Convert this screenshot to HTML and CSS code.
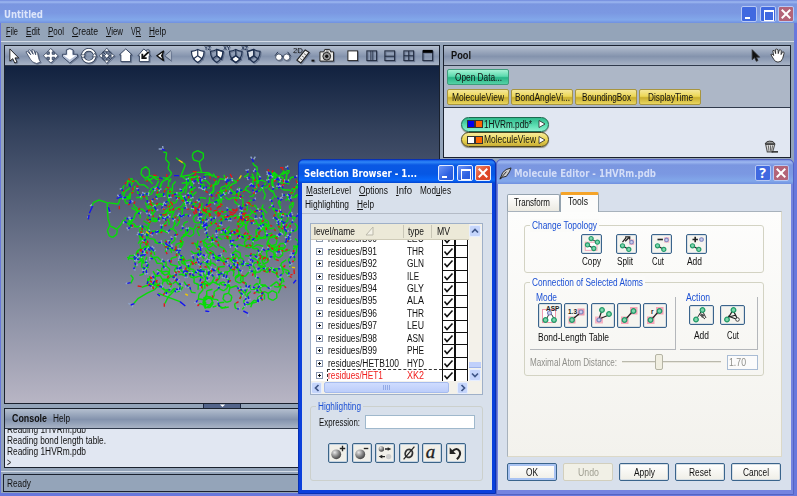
FILE: index.html
```html
<!DOCTYPE html>
<html lang="en">
<head>
<meta charset="utf-8">
<title>Untitled</title>
<link rel="stylesheet" href="styles.css">
</head>
<body>
<svg class="defs" width="0" height="0">
  <defs>
    <radialGradient id="ball" cx=".35" cy=".3" r=".8"><stop offset="0" stop-color="#e8e8e8"/><stop offset=".5" stop-color="#888"/><stop offset="1" stop-color="#333"/></radialGradient>
    <g id="shield"><path d="M2.500 4.500Q6 4 9 2.500Q12 4 15.500 4.500Q15.500 11.500 9 16Q2.500 11.500 2.500 4.500Z"/><path d="M9 2.500V9L4 12.500M9 9L14 12.500" fill="none"/></g>
    <g id="atom"><circle r="2.300" fill="#7fd6ad" stroke="#219a68" stroke-width="1.300"/></g>
    <g id="atomb"><circle r="2" fill="#c9cef0" stroke="#7d86bd" stroke-width="1.200"/></g>
    <g id="pair"><path d="M6 12L13 16" stroke="#222" stroke-width="1.300"/><use href="#atom" x="6" y="12"/><use href="#atom" x="13" y="16"/></g>
  </defs>
</svg>
<div class="main">
  <header class="titlebar"><span class="cap" data-w="39">Untitled</span>
    <span class="winbtns dim"><i class="wb min"></i><i class="wb max"></i><i class="wb close"></i></span>
  </header>
  <nav class="menu">
    <span data-w="12"><u>F</u>ile</span><span data-w="14"><u>E</u>dit</span><span data-w="16"><u>P</u>ool</span><span data-w="26"><u>C</u>reate</span><span data-w="17"><u>V</u>iew</span><span data-w="10">V<u>R</u></span><span data-w="17"><u>H</u>elp</span>
  </nav>
  <div class="work">
    <section class="left">
      <div class="viewer">
        <div class="toolbar" id="toolbar">
          <svg viewBox="0 0 18 18"><path d="M5 2V14.500L8 12L10 16.500L12.300 15.500L10.300 11.200H14Z" fill="#fff" stroke="#111" stroke-width=".9"/></svg>
          <svg viewBox="0 0 18 18"><path d="M2 5Q3 3.500 5 6L7 8L4.500 3.500Q6 2 7 4L9.500 7.500L8 3Q9.500 1.800 10.500 4L12 8L12 5Q13.500 4 14 6.500L15 11Q15.500 14 17 15.500L13 17Q8 16 6.500 12.500Z" fill="#fff" stroke="#33415c" stroke-width=".8"/></svg>
          <svg viewBox="0 0 18 18"><path d="M9 1.500L12.500 5H10.500V7.500H13V5.500L16.500 9L13 12.500V10.500H10.500V13H12.500L9 16.500L5.500 13H7.500V10.500H5V12.500L1.500 9L5 5.500V7.500H7.500V5H5.500Z" fill="#fff" stroke="#33415c" stroke-width=".9"/></svg>
          <svg viewBox="0 0 18 18"><path d="M5.500 3L9 1.500L12.500 3V7.500L17 7.500V10L9 16.500L1.500 10V7.500H5.500Z" fill="#b4bfd6" stroke="#33415c" stroke-width=".9"/><path d="M6.500 3.500L9 2.500L11.500 3.500V8.500H15.500L9 13L2.500 8.500H6.500Z" fill="#fff"/></svg>
          <svg viewBox="0 0 18 18"><circle cx="9" cy="9" r="6.200" fill="none" stroke="#28364f" stroke-width="3.400"/><circle cx="9" cy="9" r="6.200" fill="none" stroke="#fff" stroke-width="1.900"/><path d="M.5 8H5.500L3 11.500ZM12.500 10H17.500L15 6.500Z" fill="#fff" stroke="#28364f" stroke-width=".7"/></svg>
          <svg viewBox="0 0 18 18"><circle cx="9" cy="9" r="5.500" fill="none" stroke="#33415c" stroke-width="1"/><path d="M9 2V16M2 9H16M5 5L13 13M13 5L5 13" stroke="#33415c" stroke-width="1"/><path d="M9 1L11.500 4.500H6.500ZM9 17L11.500 13.500H6.500ZM1 9L4.500 6.500V11.500ZM17 9L13.500 6.500V11.500ZM9 6.500L11.500 9L9 11.500L6.500 9Z" fill="#fff" stroke="#28364f" stroke-width=".7"/></svg>
          <svg viewBox="0 0 18 18"><path d="M9 2L15.500 8H14V15H4V8H2.500Z" fill="#fff" stroke="#33415c" stroke-width="1"/></svg>
          <svg viewBox="0 0 18 18"><path d="M8 2L11 4.500V3H13.500V7L15 9H13.500V15H3.500V9H2Z" fill="#fff" stroke="#33415c" stroke-width="1"/><path d="M13 5L7 11M6.500 7V11.500H11" fill="none" stroke="#111" stroke-width="1.900"/></svg>
          <svg viewBox="0 0 18 18"><path d="M9 4L2 9L9 14Q6.500 9 9 4Z" fill="#fff" stroke="#111" stroke-width="1.300"/><path d="M8 5.500L6 9L8 12.500Z" fill="#111"/><path d="M16.500 3.500L10 9L16.500 14" fill="#aeb8c8" stroke="#536079"/></svg>
          <svg class="s1" viewBox="0 0 18 18" fill="#fff" stroke="#1f3050" stroke-width="1.200"><use href="#shield"/></svg>
          <svg viewBox="0 0 18 18" fill="none" stroke="#1f3050" stroke-width="1.200"><path d="M9 2.500L15.500 4.500L14 12.500L9 9Z" fill="#fff"/><use href="#shield"/><text x="-4" y="3.500" class="tt">YZ</text></svg>
          <svg viewBox="0 0 18 18" fill="none" stroke="#1f3050" stroke-width="1.200"><path d="M9 9L14 12.500L9 16L4 12.500Z" fill="#fff"/><use href="#shield"/><text x="-4" y="3.500" class="tt">XY</text></svg>
          <svg viewBox="0 0 18 18" fill="none" stroke="#1f3050" stroke-width="1.200"><path d="M9 2.500L2.500 4.500L4 12.500L9 9Z" fill="#dde2ea"/><use href="#shield"/><text x="-4" y="3.500" class="tt">XZ</text></svg>
          <svg class="s2" viewBox="0 0 18 18"><path d="M1 9L4 5M17 9L14 5M7 9.500H11" stroke="#28364f" fill="none"/><circle cx="5" cy="10.500" r="3.300" fill="#fff" stroke="#28364f" stroke-width=".8"/><circle cx="13" cy="10.500" r="3.300" fill="#fff" stroke="#28364f" stroke-width=".8"/></svg>
          <svg class="s3" viewBox="0 0 18 18"><path d="M11.500 3L15.500 5.500L7 16.500L3 13.500Z" fill="#eee" stroke="#222" stroke-width="1.200"/><path d="M6.500 12L8 13M8.500 9.500L10 10.500M10.500 7L12 8" stroke="#444"/><text x="-1" y="6" class="t2">2D</text><rect x="18" y="13" width="3" height="2" fill="#111"/></svg>
          <svg class="s4" viewBox="0 0 18 18"><path d="M2 5H6L7 2.500H12L13 5H16V14.500H2Z" fill="#e9e9e6" stroke="#222"/><circle cx="9" cy="9.500" r="4" fill="#999" stroke="#222"/><circle cx="9" cy="9.500" r="1.700" fill="#111"/><rect x="8" y="3.500" width="3" height="1.500" fill="#888"/></svg>
          <svg class="s5" viewBox="0 0 18 18"><rect x="4" y="4" width="10" height="10" fill="#fff" stroke="#222"/></svg>
          <svg viewBox="0 0 18 18" class="ln"><rect x="4" y="4" width="10" height="10"/><path d="M8 4V14M10 4V14" stroke-width=".8"/></svg>
          <svg viewBox="0 0 18 18" class="ln"><rect x="4" y="4" width="10" height="10"/><path d="M4 9.500H14"/></svg>
          <svg viewBox="0 0 18 18" class="ln"><rect x="4" y="4" width="10" height="10"/><path d="M4 9H14M9 4V14"/></svg>
          <svg viewBox="0 0 18 18" class="ln"><rect x="4" y="4" width="10" height="10"/><path d="M4 4.500H14" stroke="#000" stroke-width="3"/></svg>
        </div>
        <div class="viewport"><svg id="mol" class="mol" viewBox="0 0 660 570"></svg></div>
      </div>
      <div class="grip"><svg viewBox="0 0 8 4"><path d="M1 .5H7L4 3.500Z" fill="#fff"/></svg></div>
      <div class="console">
        <div class="phead"><b data-w="35">Console</b><span data-w="17">Help</span></div>
        <div class="log"><p><span data-w="79">Reading 1HVRm.pdb</span></p><p><span data-w="99">Reading bond length table.</span></p><p><span data-w="79">Reading 1HVRm.pdb</span></p><p><span data-w="4">&gt;</span></p></div>
      </div>
    </section>
    <section class="pool">
      <div class="phead"><b data-w="20">Pool</b>
        <svg class="parr" viewBox="0 0 18 18"><path d="M5 2V14L8 11.500L10 16L12 15L10 11H14Z" fill="#111" stroke="#333"/></svg>
        <svg class="phand" viewBox="0 0 18 18"><path d="M2 8Q3 6.500 5 9L4 4Q5.500 2.500 6.500 5L7 7L7 2.500Q8.500 1.500 9.500 3L9.800 7L11 3Q12.500 2.500 13 4L12.800 8L14.500 5Q16 5 16 6.500L14.500 12Q13.500 16 9.500 16Q6.500 16 5 13Z" fill="#fff" stroke="#222" stroke-width=".9"/></svg>
      </div>
      <div class="pbtns">
        <div class="pb green"><span data-w="47">Open Data...</span></div>
        <div class="prow"><div class="pb"><span data-w="52">MoleculeView</span></div><div class="pb"><span data-w="55">BondAngleVi...</span></div><div class="pb"><span data-w="49">BoundingBox</span></div><div class="pb"><span data-w="45">DisplayTime</span></div></div>
      </div>
      <div class="plist">
        <div class="nodes">
          <div class="node green"><i class="sq bl"></i><i class="sq or"></i><span data-w="48">1HVRm.pdb*</span><svg viewBox="0 0 8 8"><path d="M1 .5L7 4L1 7.500Z" fill="#fff" stroke="#222" stroke-width=".8"/></svg></div>
          <div class="node"><i class="sq"></i><i class="sq or"></i><span data-w="52">MoleculeView</span><svg viewBox="0 0 8 8"><path d="M1 .5L7 4L1 7.500Z" fill="#fff" stroke="#222" stroke-width=".8"/></svg></div>
        </div>
        <svg class="bin" viewBox="0 0 14 14"><path d="M2.500 5L4 12H9L11 5Z" fill="#ddd" stroke="#555"/><path d="M5 6L5.500 11M7 6V11M9 6L8 11" stroke="#555" stroke-width=".8"/><path d="M8 12H14" stroke="#333" stroke-width="1.500"/><path d="M2 4.500Q3 2 6 2Q10 1.500 11 4.500Z" fill="#999" stroke="#222" stroke-width=".8"/></svg>
      </div>
    </section>
  </div>
  <div class="statuswrap"><div class="status"><span data-w="24">Ready</span></div></div>
</div>

<div class="sel">
  <header class="seltitle"><span class="cap" data-w="113">Selection Browser - 1...</span><span class="winbtns"><i class="wb min"></i><i class="wb max"></i><i class="wb close"></i></span></header>
  <div class="selbody">
    <nav class="smenu"><div><span data-w="45"><u>M</u>asterLevel</span><span data-w="29"><u>O</u>ptions</span><span data-w="16"><u>I</u>nfo</span><span data-w="31">Mod<u>u</u>les</span></div><div class="r2"><span data-w="44">Hi<u>g</u>hlighting</span><span data-w="17"><u>H</u>elp</span></div></nav>
    <div class="tree">
      <div class="treetop">
        <div class="treemain">
          <div class="thead"><span class="c1"><span data-w="41">level/name</span><svg viewBox="0 0 10 10"><path d="M1 9L8 1V9Z" fill="#f4f2e8" stroke="#bbb9aa"/></svg></span><span class="c2"><span data-w="16">type</span></span><span class="c3"><span data-w="13">MV</span></span></div>
          <div class="rows"><div id="rows"></div></div>
        </div>
        <div class="vs"><i class="sb"><svg viewBox="0 0 10 10"><path d="M2 6.500L5 3.500L8 6.500"/></svg></i><b></b><i class="th"></i><i class="sb"><svg viewBox="0 0 10 10"><path d="M2 3.500L5 6.500L8 3.500"/></svg></i></div>
      </div>
      <div class="hs"><i class="sb"><svg viewBox="0 0 10 10"><path d="M6.500 2L3.500 5L6.500 8"/></svg></i><i class="ht"><em></em><em></em><em></em><em></em></i><b></b><i class="sb"><svg viewBox="0 0 10 10"><path d="M3.500 2L6.500 5L3.500 8"/></svg></i></div>
    </div>
    <div class="hl"><span class="lg"><span data-w="43">Highlighting</span></span>
      <div class="expr"><span data-w="41">Expression:</span><div class="inp"></div></div>
      <div class="hbtns">
        <i><svg viewBox="0 0 20 20"><circle cx="8" cy="11.500" r="5.500" fill="url(#ball)"/><path d="M15 2V8M12 5H18" stroke="#222" stroke-width="1.500"/></svg></i>
        <i><svg viewBox="0 0 20 20"><circle cx="8" cy="11.500" r="5.500" fill="url(#ball)"/><path d="M12 5H17" stroke="#222" stroke-width="1.500"/></svg></i>
        <i><svg viewBox="0 0 20 20"><circle cx="6" cy="5.500" r="3" fill="url(#ball)"/><circle cx="14" cy="14" r="3" fill="#ccc"/><path d="M10 5.500H14M6 14H10" stroke="#222" stroke-width="1.500"/><path d="M13 3.500L17 5.500L13 7.500ZM7 12L3 14L7 16Z" fill="#222"/></svg></i>
        <i><svg viewBox="0 0 20 20"><ellipse cx="10" cy="10.500" rx="4" ry="4.500" transform="rotate(20 10 10)" fill="none" stroke="#333" stroke-width="2"/><path d="M4 17L16 3" stroke="#222" stroke-width="1.400"/></svg></i>
        <i><svg viewBox="0 0 20 20"><text x="3" y="15.500" class="al">a</text></svg></i>
        <i><svg viewBox="0 0 20 20"><path d="M6 8Q11 3 14 8Q16 12 11 17" fill="none" stroke="#222" stroke-width="2.300"/><path d="M3 4V11H10Z" fill="#222"/></svg></i>
      </div>
    </div>
  </div>
</div>

<div class="ed">
  <header class="edtitle"><svg viewBox="0 0 14 14"><path d="M1 13L4 6Q7 2 13 1Q12 5 8 10L4 11Z" fill="#ccc" stroke="#222"/><path d="M1 13L8 5" stroke="#222"/></svg><span class="cap" data-w="142">Molecule Editor - 1HVRm.pdb</span><span class="winbtns dim"><i class="wb q">?</i><i class="wb close"></i></span></header>
  <div class="edbody">
    <div class="tabs"><div class="tab"><span data-w="36">Transform</span></div><div class="tab on"><span data-w="20">Tools</span></div></div>
    <div class="panel">
      <div class="grp g1"><span class="lg"><span data-w="65">Change Topology</span></span>
        <div class="tools">
          <div><i><svg viewBox="0 0 20 20"><rect x="2.500" y="8" width="13" height="9" fill="#fff" stroke="#ef9aae"/><path d="M8 4L16 8" stroke="#222"/><use href="#atom" x="9" y="4"/><use href="#atom" x="16" y="8"/><use href="#pair" x="-1" y="-1"/></svg></i><span data-w="19">Copy</span></div>
          <div><i><svg viewBox="0 0 20 20"><path d="M5 8L9 3M8 2H13V7M12 3L8 7" stroke="#222" stroke-width="1.400" fill="none"/><rect x="12.500" y="5" width="5.500" height="6" fill="#f7b3c4"/><use href="#atomb" x="15" y="8"/><use href="#pair" x="-1"/></svg></i><span data-w="16">Split</span></div>
          <div><i><svg viewBox="0 0 20 20"><path d="M5 5H11" stroke="#222" stroke-width="1.800"/><rect x="12.500" y="2.500" width="5.500" height="6" fill="#f7b3c4"/><use href="#atomb" x="15" y="5.500"/><use href="#pair" x="-1"/></svg></i><span data-w="12">Cut</span></div>
          <div><i><svg viewBox="0 0 20 20"><path d="M5 5H11M8 2V8" stroke="#222" stroke-width="1.800"/><use href="#atomb" x="15" y="5"/><use href="#pair" x="-1"/></svg></i><span data-w="15">Add</span></div>
        </div>
      </div>
      <div class="grp g2"><span class="lg"><span data-w="111">Connection of Selected Atoms</span></span>
        <div class="boxes">
          <div class="sub mode"><span class="st"><span data-w="21">Mode</span></span>
            <div class="mb">
              <i><svg viewBox="0 0 22 22"><rect x="3.500" y="5.500" width="13" height="13" fill="#fff" stroke="#ef9aae"/><path d="M7 16L11 8L16 16" stroke="#333" fill="none"/><use href="#atom" x="6.500" y="16"/><use href="#atom" x="15" y="16"/><use href="#atomb" x="10.500" y="9"/><text x="7" y="6.500" class="ic">ASP</text></svg></i>
              <i><svg viewBox="0 0 22 22"><rect x="3.500" y="12.500" width="7" height="7" fill="#ef9aae"/><rect x="12.500" y="4.500" width="7" height="7" fill="#ef9aae"/><path d="M9 14L14 10" stroke="#222" stroke-width="1.400"/><use href="#atom" x="7" y="16"/><use href="#atomb" x="16" y="8"/><text x="3" y="10" class="ic">1.3</text></svg></i>
              <i><svg viewBox="0 0 22 22"><rect x="3" y="12.500" width="8" height="7" fill="#f7b3c4"/><path d="M7 15L10 6M7 15L17 11" stroke="#222" stroke-width="1.200"/><use href="#atomb" x="7" y="16"/><use href="#atom" x="10" y="6"/><use href="#atom" x="17" y="10"/></svg></i>
              <i><svg viewBox="0 0 22 22"><rect x="3" y="12.500" width="7.500" height="7.500" fill="#f7a3b8"/><rect x="12" y="3" width="7.500" height="7.500" fill="#f7a3b8"/><path d="M7 16L15 7" stroke="#222" stroke-width="1.200"/><use href="#atom" x="6.500" y="16"/><use href="#atom" x="15.500" y="7"/></svg></i>
              <i><svg viewBox="0 0 22 22"><rect x="3" y="12.500" width="7.500" height="7.500" fill="#f7a3b8"/><rect x="12" y="3" width="7.500" height="7.500" fill="#f7a3b8"/><path d="M7 16L15 7" stroke="#222" stroke-width="1.200"/><use href="#atom" x="6.500" y="16"/><use href="#atom" x="15.500" y="7"/><text x="7" y="10" class="ic">r</text></svg></i>
            </div>
            <p><span data-w="71">Bond-Length Table</span></p>
          </div>
          <div class="sub act"><span class="st"><span data-w="24">Action</span></span>
            <div class="ab">
              <div><i><svg viewBox="0 0 22 18"><path d="M6 14L12 4L16 12M9 8L15 13" stroke="#333" fill="none"/><path d="M10 7L15 9L12 12Z" fill="#555"/><use href="#atom" x="6" y="13.500"/><use href="#atom" x="12.500" y="4"/></svg></i><span data-w="15">Add</span></div>
              <div><i><svg viewBox="0 0 22 18"><path d="M6 14L12 4L16 12M7 10L15 13M8 11L15 9" stroke="#222" stroke-width="1.300" fill="none"/><use href="#atom" x="6" y="13.500"/><use href="#atom" x="12.500" y="4"/><circle cx="16.500" cy="13.500" r="1.800" fill="#fff" stroke="#444"/></svg></i><span data-w="12">Cut</span></div>
            </div>
          </div>
        </div>
        <div class="dist"><span data-w="87">Maximal Atom Distance:</span><div class="track"><i></i></div><div class="num"><span data-w="17">1.70</span></div></div>
      </div>
    </div>
    <div class="bbar"><div class="bt def"><span data-w="12">OK</span></div><div class="bt off"><span data-w="21">Undo</span></div><div class="bt"><span data-w="21">Apply</span></div><div class="bt"><span data-w="22">Reset</span></div><div class="bt"><span data-w="26">Cancel</span></div></div>
  </div>
</div>
<script src="app.js"></script>
</body>
</html>
```
FILE: styles.css
```css
*{box-sizing:border-box}
body{margin:0;width:797px;height:496px;overflow:hidden;position:relative;font:10px/13px "Liberation Sans",Arial,sans-serif;color:#111;background:#6e80dc}
p{margin:0}
i,em{font-style:normal;display:block}
svg{display:block;flex:none;overflow:visible}
.defs{position:absolute}
[data-w]{display:inline-block;white-space:nowrap;transform-origin:0 50%;flex:none}
u{text-underline-offset:1px}
.cap{font:bold 10.500px/16px "DejaVu Sans","Noto Sans",sans-serif}
.main{width:797px;height:496px;display:flex;flex-direction:column;border:solid #6878dc;border-width:0 3px 3px 1px;background:#94a4b9}
.titlebar{height:23px;flex:none;margin:0 -3px 0 -1px;padding:4px 3px 0 4px;display:flex;align-items:center;color:#dce5fa;background:linear-gradient(#6f88dc 0,#9db8f0 2px,#7a96e0 4px,#7b98e2 13px,#82a8ea 20px,#7090e0 23px)}
.winbtns{display:flex;gap:2.500px;margin-left:auto}
.wb{width:16px;height:16px;border:1px solid #e4ecff;border-radius:2px;background:linear-gradient(135deg,#6f96f6,#2f62e2 60%,#2757d6);position:relative}
.dim .wb{background:#4069e0;border-color:#b7c8f4}
.wb.min::after{content:"";position:absolute;left:3px;bottom:2px;width:5px;height:2px;background:#fff}
.wb.max::after{content:"";position:absolute;left:3px;top:3px;width:8px;height:8px;border:1px solid #fff;border-top-width:2px}
.wb.close{background:linear-gradient(135deg,#f08a68,#dc4526 60%)}
.dim .wb.close{background:#b36478}
.wb.close::before,.wb.close::after{content:"";position:absolute;left:1px;top:6px;width:12px;height:2px;background:#fff;transform:rotate(45deg)}
.wb.close::after{transform:rotate(-45deg)}
.wb.q{font:bold 14px/14px "Open Sans",sans-serif;color:#fff;text-align:center}
.menu{height:19px;flex:none;border-bottom:1px solid #d3dbe6;display:flex;gap:8px;padding:2px 0 0 5px}
.work{display:flex;gap:4px;padding:3px 2px 0 3px;height:429px;flex:none}
.left{width:436px;flex:none}
.viewer{height:359px;border:1px solid #1a212e;display:flex;flex-direction:column}
.toolbar,.phead{height:20px;flex:none;border-bottom:1px solid #303a4c;background:linear-gradient(#b4bfcf,#8493ad 55%,#93a1b8 75%,#a8b3c5)}
.toolbar{display:flex;align-items:center}
.toolbar svg{width:17.500px;height:17.500px;margin-right:1.200px;filter:drop-shadow(1px 1px .5px rgba(35,50,80,.35))}
.toolbar .s1{margin-left:16px}.toolbar .s2{margin-left:10.500px}.toolbar .s3{margin-left:1px}.toolbar .s4{margin-left:5px}.toolbar .s5{margin-left:7.500px}
.ln{fill:none;stroke:#222c40;stroke-width:1.100}
.tt{font:bold 5.500px "Liberation Sans";fill:#1f3050;stroke:none}
.t2{font:8px "Liberation Sans";fill:#111}
.viewport{flex:1;background:linear-gradient(#11213f 0,#33415c 19%,#9094a8 76%,#b8b5c4 100%);overflow:hidden;padding:64px 0 0 75px}
.mol{width:220px;height:190px;fill:none;stroke-width:4.200;stroke-linecap:butt}
.grip{height:4px;width:38px;margin-left:199px;background:#53648a;border:solid #1d2740;border-width:0 1px;display:flex;justify-content:center}
.grip svg{width:7px;height:3.500px}
.console{height:60px;border:1px solid #1a212e;background:#e1e7f2;display:flex;flex-direction:column}
.phead{display:flex;align-items:center;padding-left:7px;gap:6px}
.phead b{font-weight:bold}
.log{padding-left:2px;overflow:hidden;flex:1}
.log p{height:11px;line-height:11px}
.log p:first-child{margin-top:-5px}
.pool{width:348px;height:113px;border:1px solid #1a212e;display:flex;flex-direction:column;background:#e1e7f2;margin-left:-1px}
.pool .phead{padding-left:7px}
.parr{width:15px;height:15px;margin-left:auto}
.phand{width:17px;height:17px;margin-right:4px}
.pbtns{height:42px;flex:none;background:#adb7c7;border-bottom:1px solid #303a4c;padding:3px 0 0 3px}
.prow{display:flex;gap:2px;margin-top:4px}
.pb{width:62px;height:16px;border:1px solid #a8953e;border-radius:2px;background:linear-gradient(#f4e79a,#ecd755 45%,#c9ae2e 55%,#e9d65f);display:flex;align-items:center;justify-content:center}
.pb.green{background:linear-gradient(#a4f2d4,#5cdaae 45%,#28b586 55%,#55d2a6);border-color:#3f9c7c}
.plist{flex:1;display:flex;justify-content:space-between;align-items:flex-end;padding:0 12px 3px 17px}
.nodes{display:flex;flex-direction:column;gap:.5px;align-self:flex-start;margin-top:8.500px}
.node{width:88px;height:15px;border:1px solid #4d4520;border-radius:8px;display:flex;align-items:center;padding-left:4.500px;gap:.5px;background:linear-gradient(#f6ea9c,#ecd755 50%,#c8ad35);box-shadow:0 1px 1px #8e8c80}
.node.green{background:linear-gradient(#2eb98b,#5fe0b4 60%,#8ef0cf);border-color:#1c6b50}
.node svg{width:8px;height:8px;margin-left:auto;margin-right:2.500px}
.sq{width:8px;height:8px;flex:none;border:1px solid #333;background:#fff}
.sq.or{background:#f60}.sq.bl{background:#00e}
.bin{width:15px;height:15px}
.statuswrap{margin-left:0;border-top:1px solid #d3dbe6;padding:2px 2px 0 2px}
.status{height:18px;border:1px solid #1a212e;padding:2px 0 0 3px}

.sel{position:absolute;left:298px;top:159px;width:198px;height:335px;background:#0a3fdc;border:1px solid #0831b4;border-radius:5px 5px 0 0;padding:0 3px 3px;display:flex;flex-direction:column}
.seltitle{height:23px;flex:none;display:flex;align-items:center;color:#fff;margin:0 -3px;padding:2px 4px 0 5px;border-radius:5px 5px 0 0;background:linear-gradient(#0d55e6,#2f86f8 2px,#0a58e4 5px,#0657e4 14px,#0868fa 20px,#0346d2)}
.selbody{flex:1;background:#d8e0eb}
.smenu{height:31px;border-bottom:1px solid #b4bbc6;padding:1px 0 0 4px}
.smenu div{display:flex;gap:8px;height:14px}
.smenu .r2{margin-left:-1px}
.tree{margin:9px 0 0 8px;width:173px;height:172px;border:1px solid #9fb0c8;background:#fff}
.treetop{display:flex;height:157px}
.treemain{width:158px}
.thead{height:16px;background:#ece9d8;border-bottom:1px solid #cfcbb8;display:flex;align-items:center}
.thead .c1{width:93px;display:flex;padding-left:3px;gap:10px;border-right:1px solid #c9c6b6}
.thead .c1 svg{width:10px;height:10px;margin-top:1px}
.thead .c2{width:28px;padding-left:4px;border-right:1px solid #c9c6b6}
.thead .c3{padding-left:5px}
.thead>span{height:13px}
.rows{height:141px;overflow:hidden}
#rows{margin-top:-7.500px}
.row{height:12.440px;display:flex;align-items:center}
.row .pl{width:7px;height:7px;border:1px solid #8a98b0;margin-left:5px;flex:none;position:relative;background:#fff}
.row .pl::before,.row .pl::after{content:"";position:absolute;left:1px;top:2px;width:3px;height:1px;background:#111}
.row .pl::after{left:2px;top:1px;width:1px;height:3px}
.row .nm{width:79px}
.row .ty{width:35px}
.row .ck{width:13px;height:12.440px;border:1px solid #111;border-width:1px 1px 0 1px;flex:none}
.row .ck svg{width:11px;height:11px}
.row .ck path{fill:none;stroke:#111;stroke-width:1.600}
.row .inner{display:flex;align-items:center;height:12.440px;margin-left:4px}
.row.red .inner{color:#f01c1c;border:1px dashed #333;border-right:0}
.row.red .inner .nm{margin-left:0}
.row .inner .nm{margin-left:1px}
.vs{width:13px;background:#f3f1ea;display:flex;flex-direction:column;padding-top:1px}
.vs b,.hs b{flex:1}
.sb{width:12px;height:12px;flex:none;background:#c5d5fb;border:1px solid #e6eeff;border-radius:2px}
.sb svg{width:10px;height:10px}
.sb path{fill:none;stroke:#3f5688;stroke-width:1.700}
.th{width:12px;height:6px;background:#c0d0fb;margin-bottom:1px;border-bottom:1px solid #9db3ea}
.hs{height:13px;background:#f3f1ea;display:flex;align-items:center}
.hs .sb{width:11px}
.ht{width:125px;height:11px;margin-left:2px;border:1px solid #a5bbee;border-radius:2px;background:linear-gradient(#cfdcfe,#bccdfa);display:flex;gap:1px;justify-content:center;align-items:center}
.ht em{width:1px;height:5px;background:#93aae6}
.hs b{flex:none;width:8px}
.hl{margin:11px 0 0 8px;width:173px;height:75px;border:1px solid #ccd0cc;border-radius:3px;padding-top:8px;position:relative}
.lg{position:absolute;left:5px;top:-7px;background:#d8e0eb;color:#1c50d4;padding:0 2px;height:13px}
.expr{display:flex;padding-left:8px;gap:5px;height:14px;align-items:center}
.inp{width:110px;height:14px;background:#fff;border:1px solid #9fb8cc}
.hbtns{display:flex;gap:3.500px;margin:14px 0 0 17px}
.hbtns i{width:20px;height:20px;border:1px solid #3b6488;border-radius:2px;background:#f0efe9;box-shadow:inset 0 0 0 1px #c4d2e0}
.hbtns svg{width:18px;height:18px}
.al{font:italic 21px "Liberation Serif",serif;fill:#222;stroke:#222;stroke-width:.4}

.ed{position:absolute;left:496px;top:159px;width:298px;height:336px;background:#7484e0;border:1px solid #5464c4;border-radius:5px 5px 0 0;padding:0 2px 4px 1px;display:flex;flex-direction:column}
.edtitle{height:24px;flex:none;display:flex;align-items:center;color:#d3ddf7;margin:0 -2px 0 -1px;padding:2px 4px 0 2px;gap:2px;border-radius:5px 5px 0 0;background:linear-gradient(#7a92e0,#9db8f0 2px,#7a96e0 5px,#7b98e2 14px,#82a8ea 21px,#7090e0)}
.edtitle>svg{width:13px;height:13px}
.edbody{flex:1;background:#d8e0ec;padding:7px 9px 0}
.tabs{height:20px;display:flex;align-items:flex-end}
.tab{width:53px;height:17px;border:1px solid #94a2ae;border-bottom:0;border-radius:2px 2px 0 0;background:linear-gradient(#fff,#eceae2);padding:1px 0 0 6px}
.tab.on{width:39px;height:20px;background:#fcfcfb;border-top:3px solid #f5a429;padding:0 0 0 7px;position:relative;margin-bottom:-1px;z-index:1}
.panel{height:246px;border:1px solid #a8b2bc;border-color:#a8b2bc #dcd9c8 #dcd9c8 #a8b2bc;background:linear-gradient(#fdfdfc,#f3f2ed);padding:13px 0 0 16px}
.grp{width:240px;border:1px solid #d3d3c3;border-radius:3px;position:relative}
.grp>.lg{background:#fbfbf9}
.g1{height:48px;padding:8px 0 0 56px}
.tools{display:flex;gap:14px}
.tools>div{width:21px;height:36px;display:flex;flex-direction:column;align-items:flex-start;gap:1px}
.tools span{margin-left:1px}
.panel i,.bt{border:1px solid #3a648c;border-radius:2px;background:#f5f4ef;box-shadow:inset 0 0 0 1px #d8dfe4}
.tools i{width:21px;height:20px}
.tools i svg{width:18px;height:18px;margin:0 .5px}
.g2{height:94px;margin-top:9px;padding:14px 0 0 5px}
.boxes{display:flex;gap:4px}
.sub{height:53px;border:solid #b4b7bb;border-width:0 1px 1px 0;position:relative}
.st{position:absolute;left:6px;top:-6px;color:#1c50d4;height:13px}
.mode{width:146px;padding:6px 0 0 8px}
.mb{display:flex;gap:2.300px}
.mb i{width:24px;height:25px}
.mb svg{width:22px;height:22px}
.mode p{margin-top:3px}
.act{width:78px;padding:8px 0 0 9px}
.ab{display:flex;gap:6px}
.ab>div{width:25px;display:flex;flex-direction:column;align-items:center;gap:4px}
.ab i{width:25px;height:20px}
.ab svg{width:22px;height:18px}
.ic{font:bold 6.500px "Liberation Sans";fill:#222}
.dist{display:flex;align-items:center;color:#8f8f8a;margin-top:4px;height:16px}
.track{width:99px;height:2px;border-top:1px solid #b9b8ac;border-bottom:1px solid #e8e6dc;margin:0 6px 0 5px;position:relative}
.panel .track i{position:absolute;left:33px;top:-8px;width:8px;height:16px;border-color:#b5b4a4;background:#f0eee0;box-shadow:none}
.num{width:31px;height:15px;border:1px solid #a9bcd4;background:#fbfbfb;padding-left:1px;line-height:13px}
.bbar{display:flex;gap:6px;margin-top:6px}
.bt{width:50px;height:18px;display:flex;align-items:center;justify-content:center;background:linear-gradient(#fff,#efeee6)}
.bt.def{box-shadow:inset 0 0 0 2px #a9c3f2}
.bt.off{color:#a1a093;border-color:#d2cfbd;box-shadow:none;background:#f1f0e6}
```
FILE: app.js
```javascript
// Tree rows
const rows = [['B90', 'LEU'], ['B91', 'THR'], ['B92', 'GLN'], ['B93', 'ILE'], ['B94', 'GLY'], ['B95', 'ALA'], ['B96', 'THR'], ['B97', 'LEU'], ['B98', 'ASN'], ['B99', 'PHE'], ['HETB100', 'HYD'], ['HET1', 'XK2']];
const widths = { HETB100: 71, HET1: 55 };
document.getElementById('rows').innerHTML = rows.map(([n, t]) =>
  `<div class="row${n === 'HET1' ? ' red' : ''}"><i class="pl"></i><div class="inner"><span class="nm"><span data-w="${widths[n] || 49}">residues/${n}</span></span><span class="ty"><span data-w="${t === 'ILE' ? 12 : 17}">${t}</span></span></div><i class="ck"><svg viewBox="0 0 11 11"><path d="M1.500 5.500L4 8.500L9.500 2.500"/></svg></i><i class="ck"></i></div>`).join('');

// Condense each label to its design width
document.querySelectorAll('[data-w]').forEach(el => {
  const w = +el.dataset.w, nat = el.getBoundingClientRect().width;
  el.style.transform = `scaleX(${w / nat})`;
  el.style.marginRight = `${w - nat}px`;
});

// Molecule
const G = '#08dc08', B = '#1414f0', R = '#e01818', H = '#8ea4c8', Y = '#f0c800';
const out = { [G]: '', [B]: '', [R]: '', [H]: '', [Y]: '' };
const seg = (c, x1, y1, x2, y2) => { out[c] += `M${x1.toFixed(1)} ${y1.toFixed(1)}L${x2.toFixed(1)} ${y2.toFixed(1)}`; };
let s = 20117;
const rnd = () => (s = (s * 16807) % 2147483647) / 2147483647;
const poly = [[140, 150], [200, 138], [260, 145], [330, 135], [400, 130], [470, 140], [530, 125], [610, 112], [658, 135], [658, 370], [625, 440], [600, 490], [500, 540], [375, 535], [330, 490], [250, 495], [150, 435], [138, 370], [160, 310], [125, 280], [150, 230], [112, 200]];
const inside = (x, y) => {
  let c = false;
  for (let i = 0, j = poly.length - 1; i < poly.length; j = i++) {
    const [a, b] = poly[i], [d, e] = poly[j];
    if ((b > y) !== (e > y) && x < (d - a) * (y - b) / (e - b) + a) c = !c;
  }
  return c;
};
const tip = (x, y, a, c) => {
  const L = 10 + rnd() * 5, X = x + Math.cos(a) * L, Y2 = y + Math.sin(a) * L, mx = x + (X - x) * .4, my = y + (Y2 - y) * .4;
  seg(G, x, y, mx, my);
  seg(c, mx, my, X, Y2);
  if (c === B) { seg(H, X, Y2, X + Math.cos(a + 1) * 6, Y2 + Math.sin(a + 1) * 6); seg(H, X, Y2, X + Math.cos(a - 1) * 6, Y2 + Math.sin(a - 1) * 6); }
};
// Stratified start points keep the fold evenly packed
for (let gy = 118; gy < 540; gy += 25) for (let gx = 112; gx < 658; gx += 27) {
  let x = gx + rnd() * 27, y = gy + rnd() * 25, a = rnd() * 6.28, turn = 1;
  if (!inside(x, y)) continue;
  if (rnd() < .08) {
    const r = 13 + rnd() * 3;
    for (let i = 0; i < 6; i++) seg(G, x + r * Math.cos(a + i * 1.047), y + r * Math.sin(a + i * 1.047), x + r * Math.cos(a + (i + 1) * 1.047), y + r * Math.sin(a + (i + 1) * 1.047));
    x += r * Math.cos(a); y += r * Math.sin(a);
  }
  const n = 3 + Math.floor(rnd() * 3);
  for (let i = 0; i < n; i++) {
    const L = 11 + rnd() * 8, X = x + Math.cos(a) * L, Y2 = y + Math.sin(a) * L;
    if (!inside(X, Y2)) { a += 2; continue; }
    if (rnd() < .2) { seg(B, x, y, (x + X) / 2, (y + Y2) / 2); seg(G, (x + X) / 2, (y + Y2) / 2, X, Y2); seg(H, x, y, x - Math.sin(a) * 7, y + Math.cos(a) * 7); }
    else seg(G, x, y, X, Y2);
    if (rnd() < .42) tip(X, Y2, a - turn * 1.2, rnd() < .58 ? R : B);
    x = X; y = Y2; turn = -turn; a += turn * (.5 + rnd() * .9);
  }
}
// Bound ligand in the centre
for (let k = 0; k < 42; k++) {
  const x = 335 + rnd() * 160, y = 222 + rnd() * 30 + (x - 335) * .12, a = rnd() * 6.28;
  seg(rnd() < .75 ? R : G, x, y, x + Math.cos(a) * 13, y + Math.sin(a) * 9);
}
const line = (c, pts) => { for (let i = 2; i < pts.length; i += 2) seg(c, pts[i - 2], pts[i - 1], pts[i], pts[i + 1]); };
[[36, 228, 40, 218, 57, 210, 80, 218, 115, 222, 120, 205, 150, 198], [82, 220, 82, 240, 84, 265, 90, 285, 82, 302, 88, 318, 98, 322, 110, 313, 112, 300, 100, 292, 90, 288], [110, 298, 122, 285, 130, 270, 155, 290, 175, 290],
 [250, 66, 260, 68, 257, 88, 268, 100, 264, 115, 275, 130, 265, 145, 240, 143, 210, 137, 195, 145, 183, 132, 185, 118, 198, 110, 208, 120, 208, 137], [288, 83, 296, 90], [308, 98, 316, 104, 310, 120, 303, 137, 320, 150, 320, 175, 316, 190],
 [340, 68, 353, 62, 370, 70, 370, 85, 358, 95, 341, 90, 337, 78, 340, 68], [358, 95, 360, 110, 365, 127, 345, 127, 330, 135, 300, 140], [365, 127, 385, 128, 400, 140], [519, 97, 520, 103, 532, 112, 530, 125, 540, 138],
 [140, 170, 145, 150, 155, 145, 160, 155, 148, 175, 135, 185, 130, 200], [205, 235, 225, 240], [162, 520, 175, 505, 200, 490, 225, 478, 240, 458], [185, 472, 205, 465, 225, 455], [235, 490, 260, 500, 300, 515], [255, 520, 265, 500, 285, 480],
 [152, 460, 160, 445, 152, 435], [375, 535, 370, 515, 390, 500, 400, 520, 375, 535], [595, 490, 603, 470, 590, 455, 570, 470], [607, 135, 625, 120, 620, 110]].forEach(p => line(G, p));
[[28, 250, 38, 228], [25, 268, 27, 255], [246, 57, 255, 62], [85, 232, 90, 245], [110, 205, 128, 200], [148, 162, 152, 172], [282, 137, 297, 137], [516, 86, 521, 97], [152, 525, 163, 521], [300, 515, 316, 528], [142, 460, 152, 458], [232, 492, 240, 498], [376, 543, 388, 545], [490, 543, 504, 550], [237, 143, 248, 145], [640, 460, 648, 450]].forEach(p => line(B, p));
[[220, 135, 230, 137], [118, 228, 118, 238], [338, 124, 350, 126], [173, 468, 185, 470], [253, 530, 253, 520], [600, 113, 610, 113], [450, 132, 456, 142], [642, 418, 643, 432]].forEach(p => line(R, p));
[[296, 90, 308, 98], [478, 146, 484, 136], [198, 305, 207, 310], [316, 492, 324, 496], [636, 412, 645, 413]].forEach(p => line(Y, p));
[[236, 57, 246, 57], [248, 48, 249, 57], [512, 80, 516, 86], [526, 80, 521, 88], [30, 228, 36, 224], [22, 262, 27, 260], [86, 248, 92, 246], [157, 532, 158, 524], [145, 520, 153, 524], [385, 550, 390, 545], [504, 550, 504, 560], [137, 462, 143, 458]].forEach(p => line(H, p));
document.getElementById('mol').innerHTML = [G, H, R, B, Y].map(c => `<path d="${out[c]}" stroke="${c}"/>`).join('');
```
